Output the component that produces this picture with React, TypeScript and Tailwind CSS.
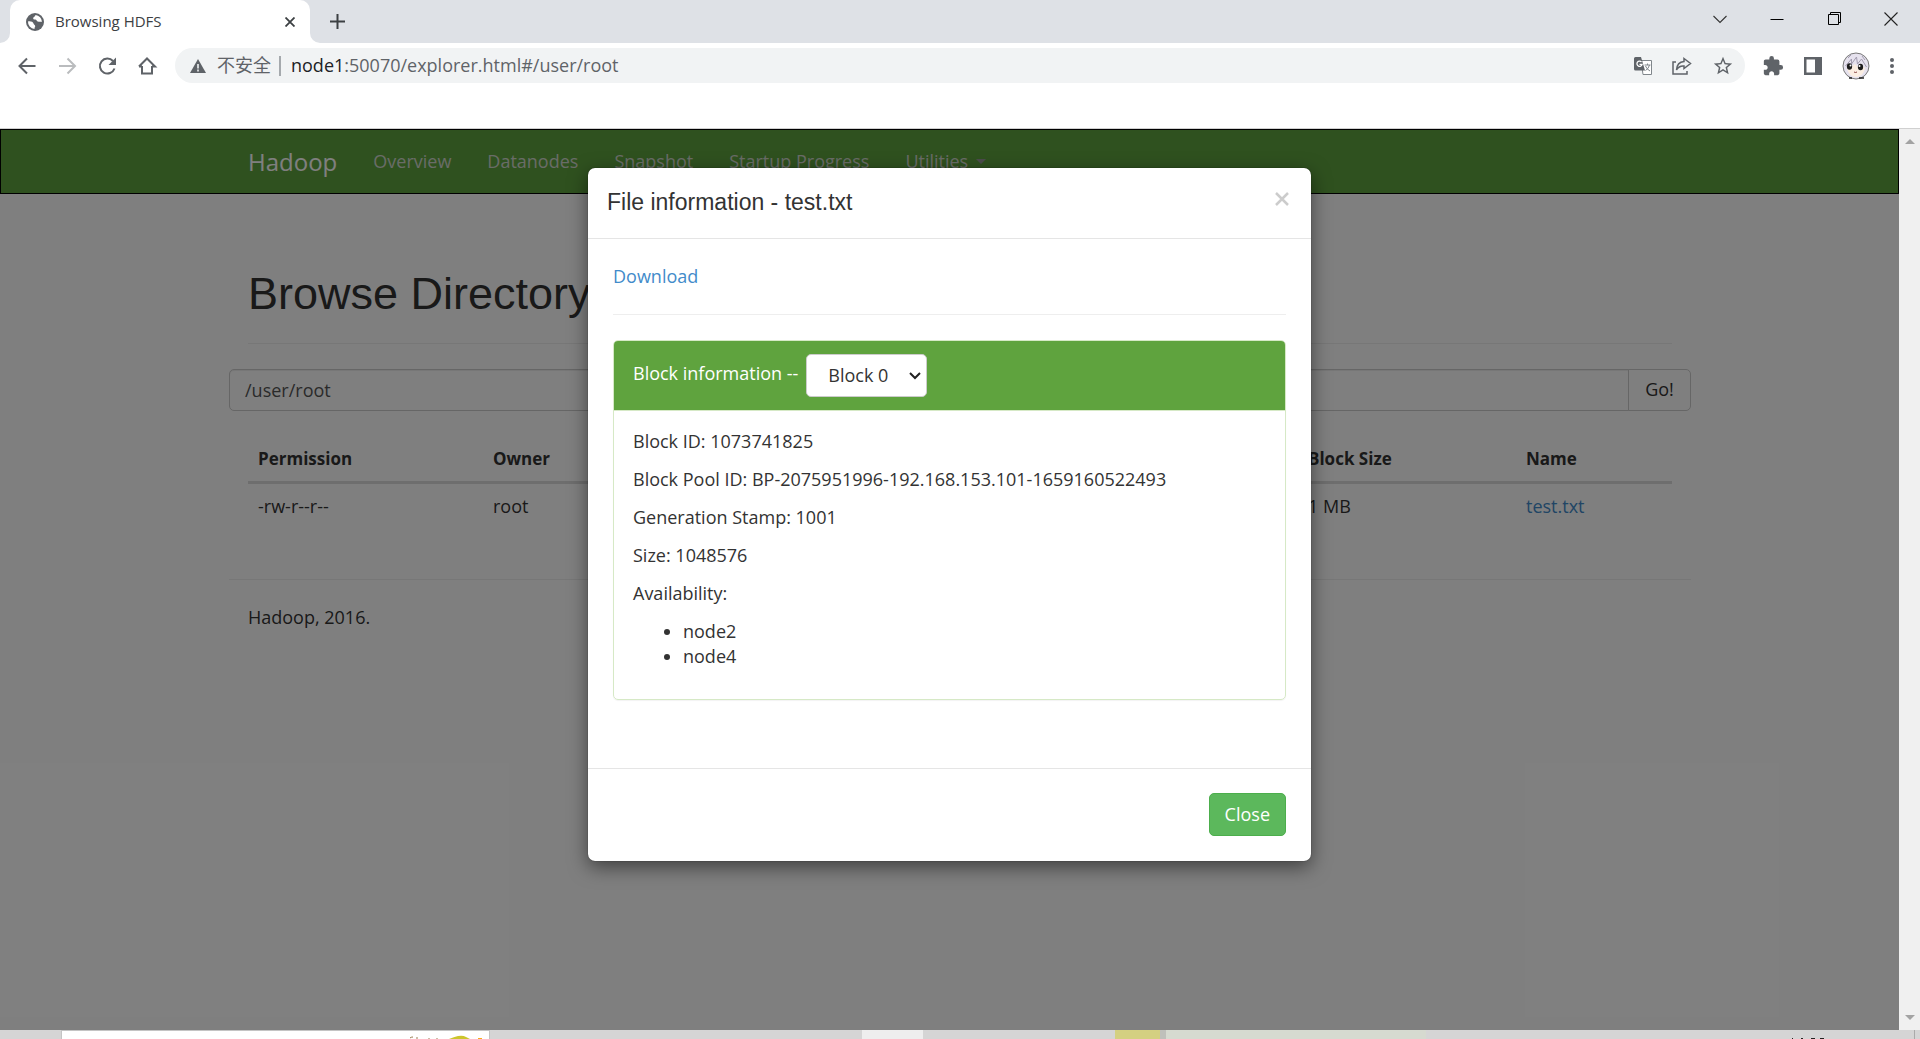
import { MdExtension, MdStarBorder } from "react-icons/md";

const navLinks = ["Overview", "Datanodes", "Snapshot", "Startup Progress"];

const blockInfo = [
  "Block ID: 1073741825",
  "Block Pool ID: BP-2075951996-192.168.153.101-1659160522493",
  "Generation Stamp: 1001",
  "Size: 1048576",
  "Availability:",
];

const columns = [
  { label: "Permission", value: "-rw-r--r--", width: "w-[235px]" },
  { label: "Owner", value: "root", width: "w-[815px]" },
  { label: "Block Size", value: "1 MB", width: "w-[218px]" },
];

function GlobeIcon() {
  return (
    <svg viewBox="0 0 18 18" className="size-[18px]" aria-hidden="true">
      <circle cx="9" cy="9" r="9" fill="#5f6368" />
      <path d="M2 8.500c2.500-.5 5 .3 5.500 2 .3 1.200 1.500 1.300 1.700 2.500.1 1-.8 1.500-.7 3A7 7 0 0 1 2 8.500z" fill="#fff" />
      <path d="M9.500 2c-.3 1.800-2 1.800-2.300 3C7 6 8 6.700 9.200 6.600c1.300-.1 1.300 1.600 2.500 2 1.500.4 2.600.2 4.300.2A7 7 0 0 0 9.500 2z" fill="#fff" />
    </svg>
  );
}

function TabStrip() {
  return (
    <div className="flex h-[43px] bg-[#dee1e6]">
      <svg viewBox="0 0 10 10" className="size-2.5 self-end" fill="#fff" aria-hidden="true">
        <path d="M10 0v10H0A10 10 0 0 0 10 0z" />
      </svg>
      <div className="flex w-[300px] items-center rounded-t-[10px] bg-white pr-2.5 pl-4">
        <GlobeIcon />
        <span className="ml-[11px] flex-1 text-[15px] text-[#3c4043]">Browsing HDFS</span>
        <button aria-label="Close tab" className="flex size-5 items-center justify-center">
          <svg viewBox="0 0 10 10" className="size-2.5" stroke="#3c4043" strokeWidth="1.8">
            <path d="M0.500 0.500l9 9M9.500 0.500l-9 9" />
          </svg>
        </button>
      </div>
      <svg viewBox="0 0 10 10" className="size-2.5 self-end" fill="#fff" aria-hidden="true">
        <path d="M0 0v10h10A10 10 0 0 1 0 0z" />
      </svg>
      <button aria-label="New tab" className="ml-2.5 flex items-center">
        <svg viewBox="0 0 15 15" className="size-[15px]" stroke="#3c4043" strokeWidth="2">
          <path d="M7.500 0v15M0 7.500h15" />
        </svg>
      </button>
      <div className="ml-auto flex h-[37px] items-center gap-[43px] pr-[22px]">
        <button aria-label="Search tabs">
          <svg viewBox="0 0 14 14" className="size-3.5" fill="none" stroke="#333" strokeWidth="1.1">
            <path d="M0.500 4l6.500 6.500L13.500 4" />
          </svg>
        </button>
        <button aria-label="Minimize">
          <svg viewBox="0 0 14 14" className="size-3.5" stroke="#000">
            <path d="M0.500 7.500h13" />
          </svg>
        </button>
        <button aria-label="Restore">
          <svg viewBox="0 0 14 14" className="size-3.5" fill="none" stroke="#000">
            <path d="M1.500 2.500h10v10h-10zM3.500 2.500v-2h10v10h-2" />
          </svg>
        </button>
        <button aria-label="Close window">
          <svg viewBox="0 0 14 14" className="size-3.5" stroke="#222" strokeWidth="1.1">
            <path d="M0.500 0.500l13 13M13.500 0.500l-13 13" />
          </svg>
        </button>
      </div>
    </div>
  );
}

function Avatar() {
  return (
    <svg viewBox="0 0 28 28" className="size-7" aria-hidden="true">
      <circle cx="14" cy="14" r="13" fill="#e6e2ee" stroke="#777" />
      <path d="M5 16c1 5 4 9 9 9s8-4 9-9l-4-3-3 2-3-3-4 3z" fill="#fbeee2" />
      <path d="M3.500 14l6-7v5l5-7 1 7 4-5 5 8M6 6l3-3M20 4l3 4" fill="none" stroke="#a39db0" />
      <ellipse cx="7.500" cy="14.500" rx="2.600" ry="3.200" fill="#1c1c1c" />
      <ellipse cx="18.500" cy="15" rx="2.600" ry="3.200" fill="#1c1c1c" />
      <circle cx="8.500" cy="13.500" r="1" fill="#fff" />
      <circle cx="17.500" cy="14" r="1" fill="#fff" />
      <path d="M12 20q1.500 1 3 0" fill="none" stroke="#844" />
      <path d="M7 26h3M17 26h5" stroke="#222" strokeWidth="1.5" />
    </svg>
  );
}

function Toolbar() {
  return (
    <div className="flex h-[85px] items-start bg-white pt-[5px]">
      <div className="flex h-[35px] flex-1 items-center">
        <div className="flex w-[175px] items-center gap-[18px] pl-4">
          <button aria-label="Back">
            <svg viewBox="0 0 22 22" className="size-[22px]" fill="none" stroke="#5f6368" strokeWidth="2">
              <path d="M19.500 11H4M11 3.500L3.500 11l7.500 7.500" />
            </svg>
          </button>
          <button aria-label="Forward">
            <svg viewBox="0 0 22 22" className="size-[22px]" fill="none" stroke="#babcbe" strokeWidth="2">
              <path d="M3 11h15.500M11.500 3.500l7.500 7.500-7.500 7.500" />
            </svg>
          </button>
          <button aria-label="Reload">
            <svg viewBox="0 0 22 22" className="size-[22px]" fill="none" stroke="#5f6368" strokeWidth="2">
              <path d="M18.500 13.500A7.500 7.500 0 1 1 17 6" />
              <path d="M20 2.500v7.500h-7.500z" fill="#5f6368" stroke="none" />
            </svg>
          </button>
          <button aria-label="Home">
            <svg viewBox="0 0 22 22" className="size-[22px]" fill="none" stroke="#5f6368" strokeWidth="2">
              <path d="M6 11v7.500h10V11M3 11.500L11 3.500l8 8h-3M3 11.500h3" />
            </svg>
          </button>
        </div>
        <div className="flex h-[35px] flex-1 items-center rounded-full bg-[#f1f3f4] pr-[11px] pl-[15px] text-[18px] text-[#5f6368]">
          <svg viewBox="0 0 16 14" className="h-3.5 w-4" aria-hidden="true">
            <path d="M8 0l8 14H0z" fill="#5f6368" />
            <path d="M8 5v4.500M8 10.500v2" stroke="#f1f3f4" strokeWidth="1.6" />
          </svg>
          <span className="ml-[11px]">不安全</span>
          <span className="mr-2.5 ml-2 h-5 w-0.5 bg-[#a5a9ad]" />
          <label htmlFor="address" className="text-[#202124]">node1</label>
          <input
            id="address"
            defaultValue=":50070/explorer.html#/user/root"
            className="min-w-0 flex-1 bg-transparent"
          />
          <div className="flex items-center gap-5">
            <button aria-label="Translate">
              <svg viewBox="0 0 18 18" className="size-[18px]">
                <path d="M7 3.500h10.500v14H9z" fill="#fff" stroke="#80868b" />
                <path d="M0 1.500A1.500 1.500 0 0 1 1.500 0H7l4 13.500H1.500A1.500 1.500 0 0 1 0 12z" fill="#5f6368" />
                <path d="M7.500 5a2.600 2.600 0 1 0 .6 2.300H5.500" fill="none" stroke="#fff" strokeWidth="1.3" />
                <path d="M10.500 8h6M13.500 6.500V8M15.500 8q-1 4-4 5.500M11.500 9q1 3 4.500 5" fill="none" stroke="#80868b" />
              </svg>
            </button>
            <button aria-label="Share">
              <svg viewBox="0 0 20 18" className="h-[18px] w-5" fill="none" stroke="#5f6368" strokeWidth="1.5">
                <path d="M4 5H1v12h14v-3" />
                <path d="M12 1.500l6.500 5L12 11.500V9Q7 8.500 4.500 13 5 5 12 4.500z" />
              </svg>
            </button>
            <button aria-label="Bookmark">
              <MdStarBorder className="size-[22px]" />
            </button>
          </div>
        </div>
      </div>
      <div className="flex h-[35px] items-center gap-5 pr-[26px] pl-[17px]">
        <button aria-label="Extensions">
          <MdExtension className="size-[22px] text-[#5f6368]" />
        </button>
        <button aria-label="Side panel">
          <svg viewBox="0 0 18 18" className="size-[18px]">
            <path d="M0 0h18v18H0z" fill="#5f6368" />
            <path d="M2.500 2.500h8.500v13H2.500z" fill="#fff" />
          </svg>
        </button>
        <button aria-label="Profile">
          <Avatar />
        </button>
        <button aria-label="Menu">
          <svg viewBox="0 0 4 16" className="h-4 w-1" fill="#5f6368">
            <circle cx="2" cy="2" r="2" />
            <circle cx="2" cy="8" r="2" />
            <circle cx="2" cy="14" r="2" />
          </svg>
        </button>
      </div>
    </div>
  );
}

function ExplorerPage() {
  return (
    <div className="h-full bg-white">
      <nav className="h-[65px] border border-black bg-[#5fa33e] pl-[21px]">
        <div className="mx-auto flex h-full max-w-[1462px] items-center gap-9 px-[19px] text-[#d2d8cf]">
          <a href="#" className="text-[24px] text-white">Hadoop</a>
          {navLinks.map((link) => (
            <a key={link} href="#">{link}</a>
          ))}
          <a href="#" className="flex items-center gap-2">
            Utilities
            <span className="border-x-[5px] border-t-[5px] border-x-transparent border-t-[#999]" />
          </a>
        </div>
      </nav>

      <div className="pl-[21px]">
        <main className="mx-auto max-w-[1462px]">
          <div className="mx-[19px] mb-[25px] border-b border-[#eee] pt-[75px] pb-[24px]">
            <h1 className="font-[Liberation_Sans,Arial,sans-serif] text-[45px] leading-[50px]">Browse Directory</h1>
          </div>
          <form className="flex h-[42px] leading-[25px]">
            <input
              aria-label="Directory"
              defaultValue="/user/root"
              className="min-w-0 flex-1 rounded-l-[5px] border border-[#ccc] px-[15px] text-[#555] shadow-[inset_0_1px_1px_rgba(0,0,0,0.075)]"
            />
            <button type="button" className="-ml-px w-[63px] rounded-r-[5px] border border-[#ccc] pb-0.5">Go!</button>
          </form>
          <div className="mx-[19px] pt-[25px]">
            <table className="w-full table-fixed text-left leading-[25px]">
              <thead>
                <tr className="border-b-[3px] border-[#ddd] text-[17px]">
                  {columns.map((col) => (
                    <th key={col.label} className={`${col.width} p-2.5 font-bold`}>{col.label}</th>
                  ))}
                  <th className="p-2.5 font-bold">Name</th>
                </tr>
              </thead>
              <tbody>
                <tr>
                  {columns.map((col) => (
                    <td key={col.label} className="p-2.5">{col.value}</td>
                  ))}
                  <td className="p-2.5">
                    <a href="#" className="text-[#428bca]">test.txt</a>
                  </td>
                </tr>
              </tbody>
            </table>
          </div>
          <footer className="mt-[50px] border-t border-[#eee] px-[19px] pt-[25px] leading-[25px]">Hadoop, 2016.</footer>
        </main>
      </div>
    </div>
  );
}

function FileModal() {
  return (
    <div
      role="dialog"
      aria-label="File information"
      className="w-[723px] rounded-[7px] bg-white shadow-[0_6px_19px_rgba(0,0,0,0.5),0_0_1px_rgba(0,0,0,0.8)]"
    >
      <div className="flex h-[71px] items-start justify-between border-b border-[#e5e5e5] pt-[18px] pr-[22px] pl-[19px]">
        <h4 className="font-[Liberation_Sans,Arial,sans-serif] text-[23px] leading-[32px]">File information - test.txt</h4>
        <button aria-label="Close">
          <svg viewBox="0 0 14 14" className="mt-1.5 size-3.5" stroke="#ccc" strokeWidth="2.5">
            <path d="M1 1l12 12M13 1L1 13" />
          </svg>
        </button>
      </div>

      <div className="px-[25px] pt-[25px] pb-[68px] leading-[25px]">
        <a href="#" className="text-[#428bca]">Download</a>
        <hr className="my-[25px] border-[#eee]" />
        <div className="rounded-[5px] border border-[#d6e9c6] shadow-[0_1px_1px_rgba(0,0,0,0.05)]">
          <div className="flex items-center gap-2 rounded-t-[4px] border-b border-[#d6e9c6] bg-[#5fa33e] px-[19px] py-[13px] text-white">
            <label htmlFor="block" className="pb-1 font-medium">Block information --</label>
            <div className="relative">
              <select id="block" className="h-[43px] w-[121px] appearance-none rounded-[5px] border border-[#ccc] bg-white px-[21px] text-[#333]">
                <option>Block 0</option>
              </select>
              <svg
                viewBox="0 0 12 8"
                className="pointer-events-none absolute top-[18px] right-[6px] h-2 w-3"
                fill="none"
                stroke="#222"
                strokeWidth="2"
              >
                <path d="M1 1l5 5 5-5" />
              </svg>
            </div>
          </div>
          <div className="px-[19px] pt-[18px] pb-[30px]">
            {blockInfo.map((line) => (
              <p key={line} className="mb-[13px]">{line}</p>
            ))}
            <ul className="list-disc pl-[50px]">
              <li>node2</li>
              <li>node4</li>
            </ul>
          </div>
        </div>
      </div>

      <div className="flex justify-end border-t border-[#e5e5e5] px-[25px] pt-6 pb-[25px]">
        <button className="h-[43px] rounded-[5px] border border-[#4cae4c] bg-[#5cb85c] px-[15px] font-medium text-white">Close</button>
      </div>
    </div>
  );
}

function Taskbar() {
  return (
    <div className="flex h-[9px] overflow-hidden bg-[#d5d5d5]">
      <div className="ml-[61px] flex h-full w-[429px] justify-end border border-b-0 border-[#c4c4c4] bg-white pr-1">
        <svg viewBox="0 0 76 8" className="h-2 w-[76px]">
          <path d="M1 7q1-1 3-1M8 6v2M20 7v1M28 7v1" stroke="#9b7c50" fill="none" />
          <path d="M40 8q5-2 9-3 5-1 8 1l4 2z" fill="#ccc52c" />
          <path d="M69 7h4v1h-4z" fill="#fba919" />
        </svg>
      </div>
      <div className="ml-[372px] w-[61px] bg-[#eee]" />
      <div className="ml-[192px] w-[45px] bg-[#d4d081]" />
      <div className="w-1.5 bg-[#bfc0bb]" />
      <div className="w-[260px] bg-[#d6dad0]" />
      <svg viewBox="0 0 36 9" className="ml-auto h-[9px] w-9" fill="#222">
        <path d="M2 8h1v1H2zM11 8h2v1h-2zM21 8h4v1h-4zM30 8h4v1h-4z" />
      </svg>
      <div className="mr-[5px] ml-[88px] w-px bg-[#aaa]" />
    </div>
  );
}

export default function App() {
  return (
    <div className="flex h-screen flex-col overflow-hidden font-[Open_Sans,Noto_Sans_CJK_SC,sans-serif] text-[18px] text-[#333]">
      <TabStrip />
      <Toolbar />
      <div className="flex min-h-0 flex-1 border-t border-[#d0d0d0]">
        <div className="relative flex-1 overflow-hidden">
          <ExplorerPage />
          <div className="absolute inset-0 flex items-start justify-center bg-black/50 pt-[39px]">
            <FileModal />
          </div>
        </div>
        <div className="flex w-[21px] flex-col items-center justify-between bg-[#f0f0f0] py-2.5">
          <span className="border-x-[5px] border-b-[5px] border-x-transparent border-b-[#a3a3a3]" />
          <span className="border-x-[5px] border-t-[5px] border-x-transparent border-t-[#a3a3a3]" />
        </div>
      </div>
      <Taskbar />
    </div>
  );
}
